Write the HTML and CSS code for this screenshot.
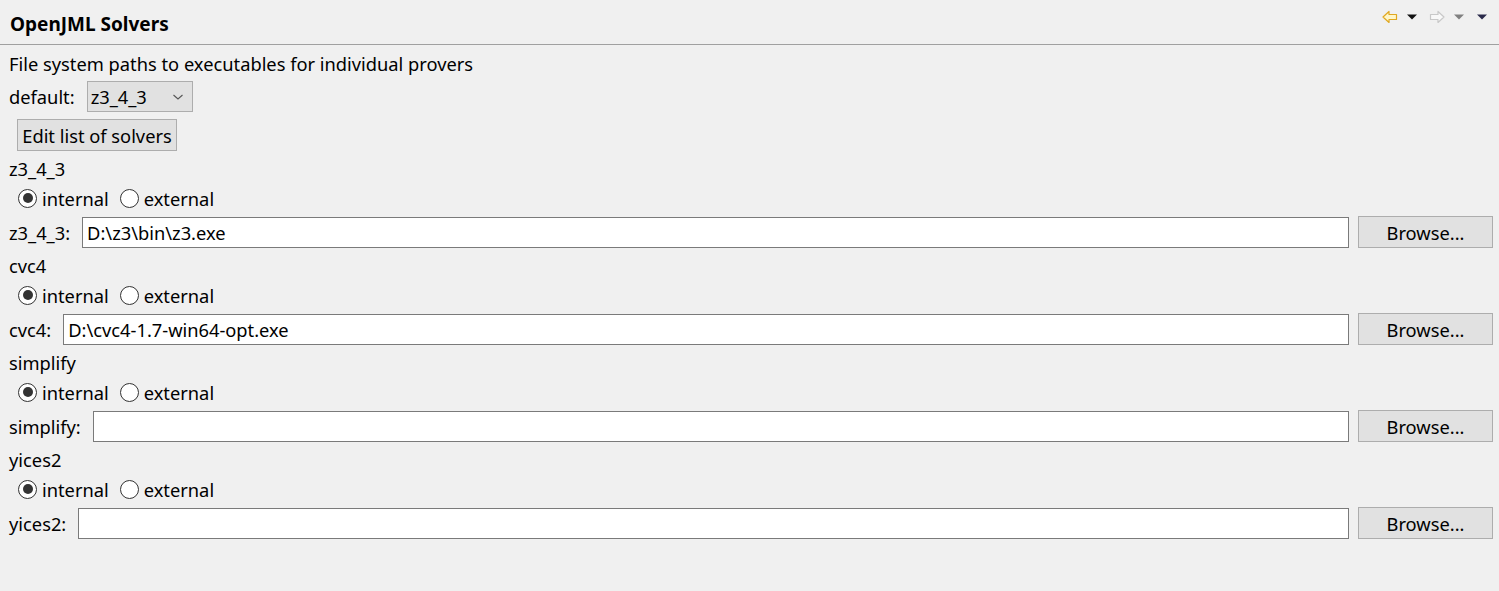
FILE: index.html
```html
<!DOCTYPE html>
<html>
<head>
<meta charset="utf-8">
<link rel="stylesheet" href="styles.css">
</head>
<body>
<div class="page">
  <header class="header">
    <div class="title">OpenJML Solvers</div>
    <div class="nav">
      <svg class="ico arrow" width="16" height="14" viewBox="0 0 16 14"><path d="M1 7 L7 1.5 L7 4.5 L14.5 4.5 L14.5 9.5 L7 9.5 L7 12.5 Z" fill="#fff6c8" stroke="#e0a820" stroke-width="1.2" stroke-linejoin="round"/></svg>
      <svg class="ico tri" width="12" height="8" viewBox="0 0 12 8"><path d="M1 1.5 L11 1.5 L6 6.5 Z" fill="#111"/></svg>
      <svg class="ico arrow" width="16" height="14" viewBox="0 0 16 14"><path d="M15 7 L9 1.5 L9 4.5 L1.5 4.5 L1.5 9.5 L9 9.5 L9 12.5 Z" fill="#f8f8f8" stroke="#c8c8c8" stroke-width="1.2" stroke-linejoin="round"/></svg>
      <svg class="ico tri" width="12" height="8" viewBox="0 0 12 8"><path d="M1 1.5 L11 1.5 L6 6.5 Z" fill="#808080"/></svg>
      <svg class="ico tri last" width="12" height="8" viewBox="0 0 12 8"><path d="M1 1.5 L11 1.5 L6 6.5 Z" fill="#2a2a4a"/></svg>
    </div>
  </header>
  <main class="content">
    <div class="line">File system paths to executables for individual provers</div>
    <div class="default-row">
      <span class="lbl">default:</span>
      <div class="combo"><span>z3_4_3</span><svg width="12" height="8" viewBox="0 0 12 8"><path d="M1.5 2 L6 6 L10.5 2" fill="none" stroke="#555" stroke-width="1.1"/></svg></div>
    </div>
    <div class="btn-row"><button class="btn edit">Edit list of solvers</button></div>

    <section class="solver">
      <div class="line">z3_4_3</div>
      <div class="radios">
        <span class="radio on"></span><span class="rlabel">internal</span>
        <span class="radio"></span><span class="rlabel">external</span>
      </div>
      <div class="path-row">
        <span class="plabel">z3_4_3:</span>
        <div class="input">D:\z3\bin\z3.exe</div>
        <button class="btn browse">Browse...</button>
      </div>
    </section>

    <section class="solver">
      <div class="line">cvc4</div>
      <div class="radios">
        <span class="radio on"></span><span class="rlabel">internal</span>
        <span class="radio"></span><span class="rlabel">external</span>
      </div>
      <div class="path-row">
        <span class="plabel">cvc4:</span>
        <div class="input">D:\cvc4-1.7-win64-opt.exe</div>
        <button class="btn browse">Browse...</button>
      </div>
    </section>

    <section class="solver">
      <div class="line">simplify</div>
      <div class="radios">
        <span class="radio on"></span><span class="rlabel">internal</span>
        <span class="radio"></span><span class="rlabel">external</span>
      </div>
      <div class="path-row">
        <span class="plabel">simplify:</span>
        <div class="input"></div>
        <button class="btn browse">Browse...</button>
      </div>
    </section>

    <section class="solver">
      <div class="line">yices2</div>
      <div class="radios">
        <span class="radio on"></span><span class="rlabel">internal</span>
        <span class="radio"></span><span class="rlabel">external</span>
      </div>
      <div class="path-row">
        <span class="plabel">yices2:</span>
        <div class="input"></div>
        <button class="btn browse">Browse...</button>
      </div>
    </section>
  </main>
</div>
</body>
</html>
```

FILE: styles.css
```css
* { box-sizing: border-box; }
html, body {
  margin: 0;
  padding: 0;
  background: #f0f0f0;
  font-family: "Noto Sans", "Open Sans", sans-serif;
  font-size: 18.3px;
  color: #000;
}
.page { width: 1499px; height: 591px; overflow: hidden; }
.header {
  height: 45px;
  display: flex;
  align-items: center;
  justify-content: space-between;
  border-bottom: 1px solid #a0a0a0;
  padding: 0 10px 0 10px;
}
.title {
  font-weight: bold;
  font-size: 19px;
  margin-top: 4px;
}
.nav {
  display: flex;
  align-items: center;
  align-self: flex-start;
  margin-top: 10px;
}
.ico { display: block; }
.ico.arrow { margin-right: 8px; }
.ico.tri { margin-right: 11px; }
.ico.tri.last { margin-right: 1px; }
.content { padding: 7px 6px 0 9px; }
.line { height: 24px; line-height: 24px; white-space: nowrap; }
.default-row {
  display: flex;
  align-items: center;
  margin-top: 5px;
  height: 31px;
}
.lbl { margin-right: 12px; }
.combo {
  width: 106px;
  height: 31px;
  background: #e1e1e1;
  border: 1px solid #adadad;
  display: flex;
  align-items: center;
  justify-content: space-between;
  padding: 0 8px 0 3px;
}
.btn {
  font-family: inherit;
  font-size: 18.3px;
  background: #e1e1e1;
  border: 1px solid #adadad;
  color: #000;
  padding: 0;
  margin: 0;
}
.btn-row { margin-top: 7px; padding-left: 8px; height: 32px; }
.btn.edit { width: 160px; height: 32px; }
.solver { margin-top: 6px; }
.radios {
  display: flex;
  align-items: center;
  height: 24px;
  margin-top: 5px;
  padding-left: 9px;
}
.radio {
  width: 19px;
  height: 19px;
  border: 1px solid #333;
  border-radius: 50%;
  background: #fff;
  display: flex;
  align-items: center;
  justify-content: center;
  margin-right: 5px;
}
.radio.on::after {
  content: "";
  width: 10px;
  height: 10px;
  border-radius: 50%;
  background: #333;
}
.rlabel { margin-right: 11px; }
.path-row {
  display: flex;
  align-items: center;
  margin-top: 6px;
  height: 32px;
}
.plabel { margin-right: 12px; white-space: nowrap; }
.input {
  flex: 1;
  height: 31px;
  background: #fff;
  border: 1px solid #7a7a7a;
  line-height: 29px;
  padding-left: 4px;
  white-space: nowrap;
}
.btn.browse {
  width: 135px;
  height: 32px;
  margin-left: 9px;
}
```
